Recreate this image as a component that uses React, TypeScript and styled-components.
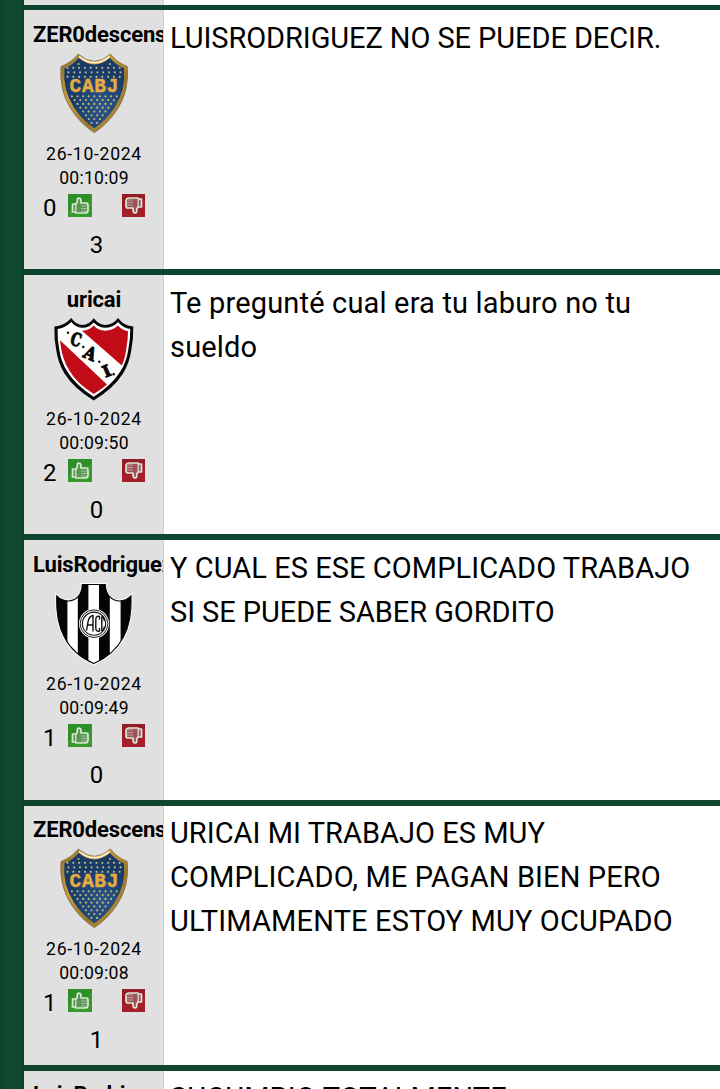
import React from "react";
import styled, { createGlobalStyle } from "styled-components";

const GlobalStyle = createGlobalStyle`
  * { box-sizing: border-box; }
  html, body { margin: 0; padding: 0; }
  body {
    height: 1089px;
    overflow: hidden;
    background: #104630;
    font-family: Roboto, "Liberation Sans", sans-serif;
    color: #000;
  }
`;

const Page = styled.main`
  height: 1089px;
  overflow: hidden;
  padding-left: 24px;
  background:
    linear-gradient(90deg, #0c452c 0, #104a30 12px, #10472e 21px, #0d3f29 24px, transparent 24px),
    #104630;
`;

const Feed = styled.div`
  display: flex;
  flex-direction: column;
  gap: 6px;
`;

const Post = styled.article`
  display: flex;
  flex: none;
  height: 259.2px;
  background: #fff;
`;

const PreviousPost = styled(Post)`
  height: 5px;
  margin-bottom: -1px;
`;

const Author = styled.aside`
  flex: none;
  width: 140px;
  padding: 10.6px 8px 0 9px;
  overflow: hidden;
  background: #e0e0e0;
  border-right: 1px solid #d0d0d0;
  display: flex;
  flex-direction: column;
`;

const EmptyAuthor = styled(Author)`
  padding: 0;
`;

const Name = styled.div`
  height: 28px;
  line-height: 28px;
  font-size: 22px;
  font-weight: 700;
  letter-spacing: -0.16px;
  text-align: center;
  white-space: nowrap;
`;

const Crest = styled.svg`
  display: block;
  width: 84px;
  height: 84px;
  margin: 3px auto 0;
  flex: none;
  overflow: visible;
`;

const Stamp = styled.time`
  display: block;
  margin-top: 6px;
  font-size: 17.6px;
  line-height: 24px;
  text-align: center;
`;

const DateLine = styled.div`
  letter-spacing: 0.7px;
`;

const TimeLine = styled.div`
  letter-spacing: 0.22px;
`;

const Votes = styled.div`
  display: flex;
  align-items: center;
  height: 36px;
  padding-left: 10px;
  font-size: 24px;
`;

const Likes = styled.span`
  flex: none;
  width: 25px;
`;

const Dislikes = styled.div`
  padding: 1px 0 0 5px;
  height: 37px;
  line-height: 36px;
  font-size: 24px;
  text-align: center;
`;

const VoteIcon = styled.svg`
  display: block;
  width: 24px;
  height: 23px;
  margin: -5px 30px 0 0;
  flex: none;
`;

const Message = styled.p`
  margin: 0;
  padding: 5.6px 0 0 6px;
  font-size: 29px;
  line-height: 44px;
  white-space: nowrap;
`;

const Line = styled.span<{ $spacing: number }>`
  display: block;
  letter-spacing: ${(p) => p.$spacing}px;
`;

type Club = "boca" | "cai" | "central";

const bocaShape =
  "M26.3 2 Q42.3 16.5 58.5 2 Q65 10.5 75.3 14.5 Q77.5 39 65 57.5 Q56 71.5 42.3 80.3 Q28.5 71.5 19.5 57.5 Q7 39 9 14.5 Q19.5 10.5 26.3 2Z";
const bocaInner =
  "M26.6 6 Q42.3 19 58 6 Q64 13 72 16.3 Q74 38 62.5 55.5 Q54 68.5 42.3 76.3 Q30.5 68.5 22 55.5 Q10.5 38 12.4 16.3 Q21 13 26.6 6Z";

const bocaStars: number[][] = [
  [26.5, 12],
  [58, 12],
  ...[15.8, 20.3, 24.8].flatMap((y, r) =>
    Array.from({ length: 10 }, (_, i) => [15.5 + i * 5.8 + (r % 2) * 0.9, y])
  ),
  ...Array.from({ length: 8 }, (_, r) => {
    const n = Math.max(2, 9 - r);
    return Array.from({ length: n }, (_, i) => [42.3 + (i - (n - 1) / 2) * 5.6, 44.3 + r * 3.8]);
  }).flat(),
];

function BocaCrest({ id }: { id: string }) {
  return (
    <Crest viewBox="0 0 84 84">
      <defs>
        <linearGradient id={`${id}-gold`} x1="0" x2="1" y2="1">
          <stop offset="0" stopColor="#8c6c2c" />
          <stop offset=".35" stopColor="#c99e40" />
          <stop offset=".65" stopColor="#9c7829" />
          <stop offset="1" stopColor="#cda33f" />
        </linearGradient>
        <radialGradient id={`${id}-blue`} cx=".62" cy=".68">
          <stop offset="0" stopColor="#2a5788" />
          <stop offset="1" stopColor="#183b69" />
        </radialGradient>
      </defs>
      <path d={bocaShape} transform="translate(0 1)" fill="#777" opacity=".5" />
      <path d={bocaShape} fill={`url(#${id}-gold)`} stroke="#7d663b" strokeWidth=".7" />
      <path d={bocaInner} fill={`url(#${id}-blue)`} />
      <path d="M27 4.3 Q42.3 17 57.6 4.3" fill="none" stroke="#fff3d0" strokeWidth="1.6" />
      <g fill="#c2b676">
        {bocaStars.map(([x, y], i) => (
          <circle key={i} cx={x} cy={y} r="1.1" />
        ))}
      </g>
      <text
        x="17.5"
        y="40.3"
        textLength="49"
        lengthAdjust="spacing"
        fontFamily="Liberation Mono"
        fontWeight="700"
        fontSize="19.5"
        fill="#e6ac40"
        stroke="#e6ac40"
        strokeWidth=".4"
      >
        CABJ
      </text>
    </Crest>
  );
}

const caiShape =
  "M19.3 1 Q24 8 30.7 8 Q37 8 41.7 1.3 Q47 8 53 8 Q61 8 66 1 Q72 9 81.3 9.5 Q81.5 22 79.3 33 Q77.5 46 71 56.5 Q62 71 41.7 83.5 Q21.5 71 12.5 56.5 Q6 46 4.2 33 Q2 22 2.4 9.5 Q12 9 19.3 1Z";
const caiInner =
  "M19.3 5 Q24 10.8 30.7 10.8 Q37 10.8 41.7 5.5 Q47 10.8 53 10.8 Q61 10.8 66 5 Q71 11 78.3 12 Q78.3 22 76.3 32.5 Q74.5 45 68.3 54.5 Q60.5 67.5 41.7 79.8 Q23 67.5 15.3 54.5 Q9 45 7.3 32.5 Q5.2 22 5.6 12 Q13 11 19.3 5Z";

function CaiCrest() {
  return (
    <Crest viewBox="0 0 84 84">
      <path d={caiShape} fill="#080808" />
      <path d={caiInner} fill="#fff" />
      <g fill="#c10b17">
        <path d="M30 13.8 Q37.5 13.3 41.7 8.5 Q46 13.5 53 13.8 Q61 13.5 65.8 8.5 Q70 13 76 14.3 Q76 22 74.3 32 Q73 42 69.8 48.5Z" />
        <path d="M8 23.2 L55 67.5 Q49.5 72.3 41.7 77 Q24.5 66 17.3 53.5 Q9.5 41 8 23.2Z" />
      </g>
      <g
        fontFamily="DejaVu Serif"
        fontWeight="700"
        fontSize="18"
        textAnchor="middle"
        fill="#080808"
        stroke="#080808"
        strokeWidth="1"
      >
        <text transform="translate(24 22.4) rotate(16)" y="6.5" textLength="10.5" lengthAdjust="spacingAndGlyphs">C</text>
        <text transform="translate(38.3 36.3) rotate(24)" y="6.5" textLength="12" lengthAdjust="spacingAndGlyphs">A</text>
        <text transform="translate(54.6 54.2) rotate(-24)" y="5.5" fontSize="16" textLength="7.5" lengthAdjust="spacingAndGlyphs">I</text>
      </g>
      <g fill="#080808">
        <circle cx="16" cy="15.7" r="1.2" />
        <circle cx="31.3" cy="30" r="1.2" />
        <circle cx="47.3" cy="44.7" r="1.2" />
        <circle cx="61.7" cy="57.3" r="1.2" />
      </g>
    </Crest>
  );
}

const centralShape =
  "M30.3 1.5 H53.3 C53.5 12 60 18 67.5 18 Q74 18 79 13 Q80 38 71.5 54 Q62 72 41.8 80.5 Q21.5 72 12.3 54 Q3.8 38 4.7 13 Q9.5 18 16.3 18 C24 18 30 12 30.3 1.5Z";

function CentralCrest({ id }: { id: string }) {
  return (
    <Crest viewBox="0 -1 84 84">
      <clipPath id={`${id}-clip`}>
        <path d={centralShape} />
      </clipPath>
      <path d={centralShape} fill="#fff" stroke="#fff" strokeWidth="2.8" />
      <g clipPath={`url(#${id}-clip)`}>
        <path d="M0 0H15.4V84H0ZM25.8 0H36.4V84H25.8ZM47 0H57.8V84H47ZM68.6 0H84V84H68.6Z" fill="#050505" />
      </g>
      <path d={centralShape} fill="none" stroke="#050505" strokeWidth="1.1" />
      <circle cx="42" cy="40.7" r="15" fill="#fff" />
      <circle cx="42" cy="40.7" r="13.8" fill="none" stroke="#222" strokeWidth="1" />
      <circle cx="42" cy="40.7" r="11.6" fill="#fff" stroke="#111" strokeWidth="1.1" />
      <g fill="none" stroke="#111" strokeWidth="1.4">
        <path d="M34.5 47.5L36 39Q37 33 41 32.5V48.5M35.5 42H41" />
        <path d="M47.5 36.5V33.5Q43.8 32.5 43.8 36.5V45Q43.8 49 47.5 48V45" />
        <path d="M52.3 38Q52 34 49.8 34V47.5Q52 47.5 52.3 43.5" />
      </g>
    </Crest>
  );
}

function ClubCrest({ club, id }: { club: Club; id: string }) {
  if (club === "boca") return <BocaCrest id={id} />;
  if (club === "cai") return <CaiCrest />;
  return <CentralCrest id={id} />;
}

function Thumb({ down = false }: { down?: boolean }) {
  const main = down ? "#a51f2a" : "#369a2f";
  const dark = down ? "#7d1a24" : "#247f20";
  return (
    <VoteIcon viewBox="0 0 24 23">
      <rect width={down ? 23 : 24} height="23" fill={main} />
      <path d="M0 0H23V5L0 17Z" fill={dark} opacity=".4" />
      <g transform={down ? "rotate(180 12 11.5)" : undefined}>
        <path
          d="M4.5 10H8L9.3 8V5.5Q9.3 4 11 4.2Q13 4.2 13 7V9H18.5Q20.3 9.5 20 12V16.5Q19.5 19 17 19H8L7 18H4.5Z"
          fill={down ? "#a0525c" : "#5b9556"}
          stroke="#dbe8d3"
          strokeWidth="1.7"
          strokeLinejoin="round"
        />
        <path d="M7.8 10V18" stroke="#dbe8d3" strokeWidth="1.2" />
        <path d="M13 12H19M13 14.5H19M13 17H18" stroke="#dbe8d3" strokeWidth=".7" opacity=".8" />
      </g>
    </VoteIcon>
  );
}

interface PostData {
  name: string;
  club: Club;
  time: string;
  likes: number;
  dislikes: number;
  lines: [string, number][];
}

const posts: PostData[] = [
  {
    name: "ZER0descenso", club: "boca", time: "00:10:09", likes: 0, dislikes: 3,
    lines: [["LUISRODRIGUEZ NO SE PUEDE DECIR.", -0.08]],
  },
  {
    name: "uricai", club: "cai", time: "00:09:50", likes: 2, dislikes: 0,
    lines: [["Te pregunté cual era tu laburo no tu", 0.17], ["sueldo", 0.17]],
  },
  {
    name: "LuisRodriguez", club: "central", time: "00:09:49", likes: 1, dislikes: 0,
    lines: [["Y CUAL ES ESE COMPLICADO TRABAJO", 0.06], ["SI SE PUEDE SABER GORDITO", -0.06]],
  },
  {
    name: "ZER0descenso", club: "boca", time: "00:09:08", likes: 1, dislikes: 1,
    lines: [
      ["URICAI MI TRABAJO ES MUY", 0.04],
      ["COMPLICADO, ME PAGAN BIEN PERO", 0.1],
      ["ULTIMAMENTE ESTOY MUY OCUPADO", 0.15],
    ],
  },
  {
    name: "LuisRodriguez", club: "central", time: "00:08:51", likes: 0, dislikes: 0,
    lines: [["SUCUMBIO TOTALMENTE", 0.12]],
  },
];

export default function App() {
  return (
    <>
      <GlobalStyle />
      <Page>
        <Feed>
          <PreviousPost>
            <EmptyAuthor />
          </PreviousPost>
          {posts.map((post, i) => (
            <Post key={i}>
              <Author>
                <Name>{post.name}</Name>
                <ClubCrest club={post.club} id={`crest-${i}`} />
                <Stamp>
                  <DateLine>26-10-2024</DateLine>
                  <TimeLine>{post.time}</TimeLine>
                </Stamp>
                <Votes>
                  <Likes>{post.likes}</Likes>
                  <Thumb />
                  <Thumb down />
                </Votes>
                <Dislikes>{post.dislikes}</Dislikes>
              </Author>
              <Message>
                {post.lines.map(([text, spacing]) => (
                  <Line key={text} $spacing={spacing}>
                    {text}
                  </Line>
                ))}
              </Message>
            </Post>
          ))}
        </Feed>
      </Page>
    </>
  );
}
